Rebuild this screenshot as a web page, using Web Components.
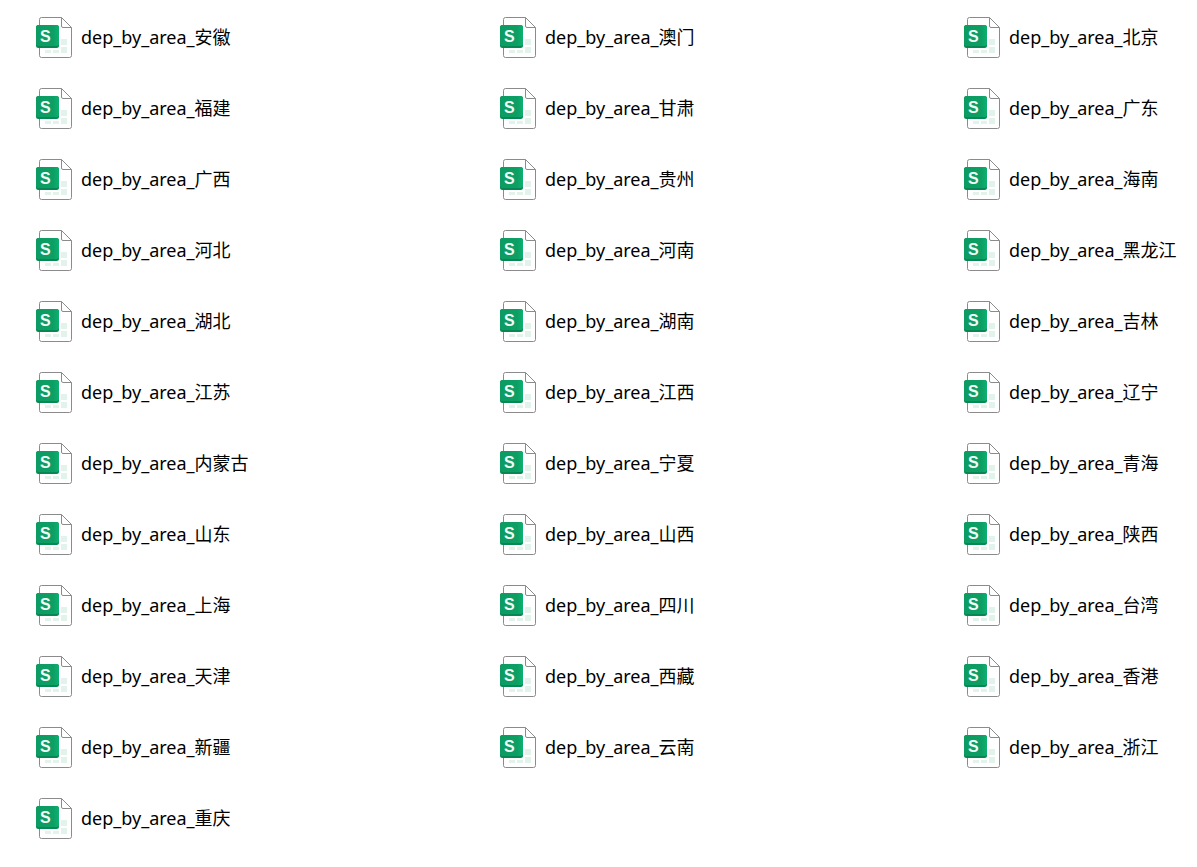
<!DOCTYPE html>
<html lang="zh-CN">
<head>
    <meta charset="utf-8">
    <title>dep_by_area</title>
    <style>
        body {
            margin: 0;
            background: #fff;
            color: #000;
            font-family: "Noto Sans", "Noto Sans CJK SC", sans-serif;
            font-size: 18px;
            line-height: 24px;
        }
    </style>
</head>
<body>

<file-grid>
    <file-item>dep_by_area_安徽</file-item>
    <file-item>dep_by_area_澳门</file-item>
    <file-item>dep_by_area_北京</file-item>
    <file-item>dep_by_area_福建</file-item>
    <file-item>dep_by_area_甘肃</file-item>
    <file-item>dep_by_area_广东</file-item>
    <file-item>dep_by_area_广西</file-item>
    <file-item>dep_by_area_贵州</file-item>
    <file-item>dep_by_area_海南</file-item>
    <file-item>dep_by_area_河北</file-item>
    <file-item>dep_by_area_河南</file-item>
    <file-item>dep_by_area_黑龙江</file-item>
    <file-item>dep_by_area_湖北</file-item>
    <file-item>dep_by_area_湖南</file-item>
    <file-item>dep_by_area_吉林</file-item>
    <file-item>dep_by_area_江苏</file-item>
    <file-item>dep_by_area_江西</file-item>
    <file-item>dep_by_area_辽宁</file-item>
    <file-item>dep_by_area_内蒙古</file-item>
    <file-item>dep_by_area_宁夏</file-item>
    <file-item>dep_by_area_青海</file-item>
    <file-item>dep_by_area_山东</file-item>
    <file-item>dep_by_area_山西</file-item>
    <file-item>dep_by_area_陕西</file-item>
    <file-item>dep_by_area_上海</file-item>
    <file-item>dep_by_area_四川</file-item>
    <file-item>dep_by_area_台湾</file-item>
    <file-item>dep_by_area_天津</file-item>
    <file-item>dep_by_area_西藏</file-item>
    <file-item>dep_by_area_香港</file-item>
    <file-item>dep_by_area_新疆</file-item>
    <file-item>dep_by_area_云南</file-item>
    <file-item>dep_by_area_浙江</file-item>
    <file-item>dep_by_area_重庆</file-item>
</file-grid>

<script>
(() => {

    const define = (name, html) => {
        const template = document.createElement("template")
        template.innerHTML = html

        customElements.define(name, class extends HTMLElement {

            constructor(){
                super()
                this.root = this.attachShadow({mode: 'open'})
                this.root.appendChild(template.content.cloneNode(true))
            }

        })
    }

    // Spreadsheet icon: a page with a folded corner, pale cells and a green badge
    define("sheet-icon", `
        <style>

            :host {
                display: block;
                flex: none;
                width: 37px;
                height: 43px;
            }

            svg {
                display: block;
            }

            text {
                font: bold 16px "Liberation Sans", sans-serif;
                fill: #f1faf6;
            }

        </style>
        <svg width="37" height="43" viewBox="0 0 37 43" aria-hidden="true">
            <defs>
                <linearGradient id="badge" x1="0" y1="0" x2="1" y2="0">
                    <stop offset="0" stop-color="#0d9b62"/>
                    <stop offset=".75" stop-color="#0c9f65"/>
                    <stop offset="1" stop-color="#0cb170"/>
                </linearGradient>
            </defs>
            <path d="M5.500 2.500H25.500L35.500 12.500V40.500Q35.500 42.500 33.500 42.500H5.500Q3.500 42.500 3.500 40.500V4.500Q3.500 2.500 5.500 2.500Z" fill="#fff" stroke="#8b8b8b"/>
            <path d="M25.500 2.500V11Q25.500 12.500 27 12.500H35.500" fill="none" stroke="#8b8b8b"/>
            <path d="M25 24h6v6h-6zM25 32h6v6h-6zM17 35h6v3h-6zM9 35h6v3H9z" fill="#e2f3ec"/>
            <rect x="0" y="10" width="23" height="23" rx="2.500" fill="#078852"/>
            <rect x="0" y="10" width="23" height="21" rx="2.500" fill="url(#badge)"/>
            <text x="4" y="27">S</text>
        </svg>
    `)

    define("file-item", `
        <style>

            :host {
                display: flex;
                align-items: center;
                gap: 8px;
                height: 71px;
                white-space: nowrap;
            }

        </style>
        <sheet-icon></sheet-icon>
        <span><slot></slot></span>
    `)

    define("file-grid", `
        <style>

            :host {
                display: grid;
                grid-template-columns: 2fr 2fr 1fr;
                padding: 1px 1px 0 36px;
            }

        </style>
        <slot></slot>
    `)

})()
</script>
</body>
</html>
